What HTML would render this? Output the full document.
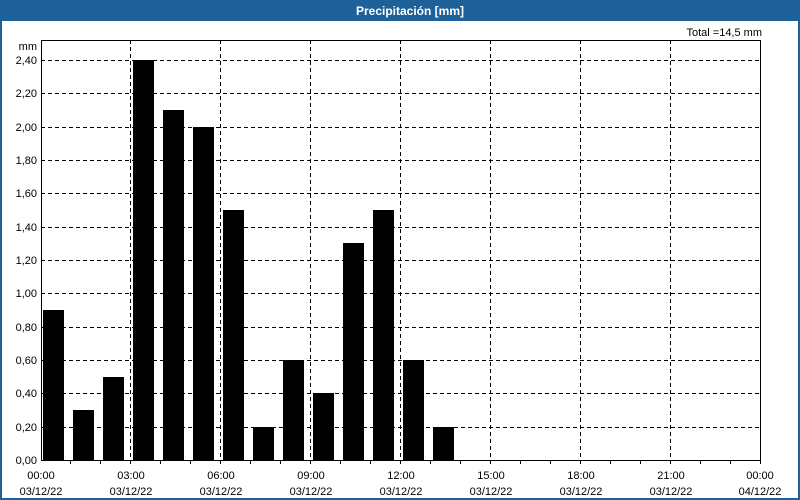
<!DOCTYPE html>
<html><head><meta charset="utf-8"><style>
html,body{margin:0;padding:0;background:#fff;}
svg{display:block;font-family:"Liberation Sans",sans-serif;}
</style></head><body>
<svg width="800" height="500" viewBox="0 0 800 500" xmlns="http://www.w3.org/2000/svg">
<rect x="0" y="0" width="800" height="500" fill="#1e6098"/>
<rect x="2" y="21" width="796" height="477" fill="#fff"/>
<text x="410" y="15" fill="#fff" font-size="12" font-weight="bold" text-anchor="middle">Precipitación [mm]</text>
<text x="762" y="36" font-size="11" text-anchor="end" fill="#000">Total =14,5 mm</text>
<text x="37" y="50" font-size="11" text-anchor="end" fill="#000">mm</text>
<g fill="#000">
<rect x="43" y="310" width="21" height="150"/>
<rect x="73" y="410" width="21" height="50"/>
<rect x="103" y="377" width="21" height="83"/>
<rect x="133" y="60" width="21" height="400"/>
<rect x="163" y="110" width="21" height="350"/>
<rect x="193" y="127" width="21" height="333"/>
<rect x="223" y="210" width="21" height="250"/>
<rect x="253" y="427" width="21" height="33"/>
<rect x="283" y="360" width="21" height="100"/>
<rect x="313" y="393" width="21" height="67"/>
<rect x="343" y="243" width="21" height="217"/>
<rect x="373" y="210" width="21" height="250"/>
<rect x="403" y="360" width="21" height="100"/>
<rect x="433" y="427" width="21" height="33"/>
</g>
<g stroke="#000" stroke-width="1" stroke-dasharray="4,3" fill="none">
<path d="M41 60.5H760M41 93.5H760M41 127.5H760M41 160.5H760M41 193.5H760M41 227.5H760M41 260.5H760M41 293.5H760M41 327.5H760M41 360.5H760M41 393.5H760M41 427.5H760"/>
<path d="M130.5 40V460M220.5 40V460M310.5 40V460M400.5 40V460M490.5 40V460M580.5 40V460M670.5 40V460"/>
</g>
<rect x="41.5" y="40.5" width="719" height="420" fill="none" stroke="#000"/>
<g stroke="#000">
<path d="M70.5 460v4M100.5 460v4M130.5 460v4M160.5 460v4M190.5 460v4M220.5 460v4M250.5 460v4M280.5 460v4M310.5 460v4M340.5 460v4M370.5 460v4M400.5 460v4M430.5 460v4M460.5 460v4M490.5 460v4M520.5 460v4M550.5 460v4M580.5 460v4M610.5 460v4M640.5 460v4M670.5 460v4M700.5 460v4M730.5 460v4M760.5 460v4"/>
</g>
<g font-size="11" text-anchor="end" fill="#000">
<text x="37" y="64">2,40</text><text x="37" y="97">2,20</text><text x="37" y="131">2,00</text>
<text x="37" y="164">1,80</text><text x="37" y="197">1,60</text><text x="37" y="231">1,40</text>
<text x="37" y="264">1,20</text><text x="37" y="297">1,00</text><text x="37" y="331">0,80</text>
<text x="37" y="364">0,60</text><text x="37" y="397">0,40</text><text x="37" y="431">0,20</text>
<text x="37" y="464">0,00</text>
</g>
<g font-size="11" text-anchor="middle" fill="#000">
<text x="41" y="479">00:00</text><text x="41" y="495">03/12/22</text>
<text x="131" y="479">03:00</text><text x="131" y="495">03/12/22</text>
<text x="221" y="479">06:00</text><text x="221" y="495">03/12/22</text>
<text x="311" y="479">09:00</text><text x="311" y="495">03/12/22</text>
<text x="401" y="479">12:00</text><text x="401" y="495">03/12/22</text>
<text x="491" y="479">15:00</text><text x="491" y="495">03/12/22</text>
<text x="581" y="479">18:00</text><text x="581" y="495">03/12/22</text>
<text x="671" y="479">21:00</text><text x="671" y="495">03/12/22</text>
<text x="760" y="479">00:00</text><text x="760" y="495">04/12/22</text>
</g>
</svg>
</body></html>
